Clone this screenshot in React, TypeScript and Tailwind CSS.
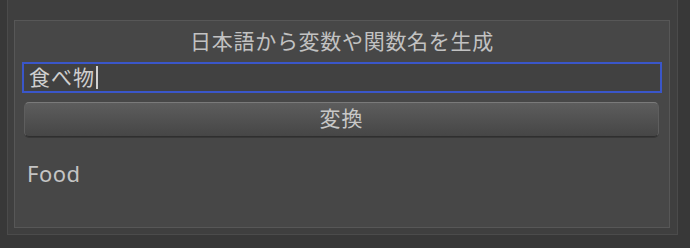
import React from "react";

export default function App() {
  const font = { fontFamily: '"Noto Sans", "Noto Sans CJK JP", sans-serif' };
  return (
    <div className="w-[690px] h-[248px] bg-[#383838] overflow-hidden" style={font}>
      <div className="ml-[7px] w-[671px] h-[235px] bg-[#3f3f3f] border-l border-r border-b border-[#4b4b4b] pt-[20px] pl-[6px]">
        <div className="w-[656px] h-[208px] bg-[#474747] border border-[#575757] flex flex-col">
          <div className="h-[41px] leading-[41px] text-center text-[21px] text-[#c2c2c2] tracking-[0.7px]">
            日本語から変数や関数名を生成
          </div>
          <div className="ml-[7px] w-[640px] h-[31px] border-2 border-[#3a56c9] bg-[#414141] flex items-center pl-[5px]">
            <span className="text-[21px] leading-[27px] text-[#cfcfcf] tracking-[1px]">食べ物</span>
            <span className="ml-[1px] w-[2px] h-[23px] bg-[#d0d0d0]" />
          </div>
          <div className="mt-[9px] ml-[9px] w-[635px] h-[35px] rounded-[5px] border border-[#5e5e5e] border-t-[#7a7a7a] border-b-[#2f2f2f] bg-gradient-to-b from-[#5d5d5d] to-[#464646] flex items-center justify-center shadow-[0_1px_0_#383838]">
            <span className="text-[21px] leading-[30px] text-[#c8c8c8] -mt-[3px] tracking-[1px]">変換</span>
          </div>
          <div className="mt-[21px] ml-[12px] text-[22px] leading-[30px] text-[#c4c4c4] tracking-[0.5px]">Food</div>
        </div>
      </div>
    </div>
  );
}
